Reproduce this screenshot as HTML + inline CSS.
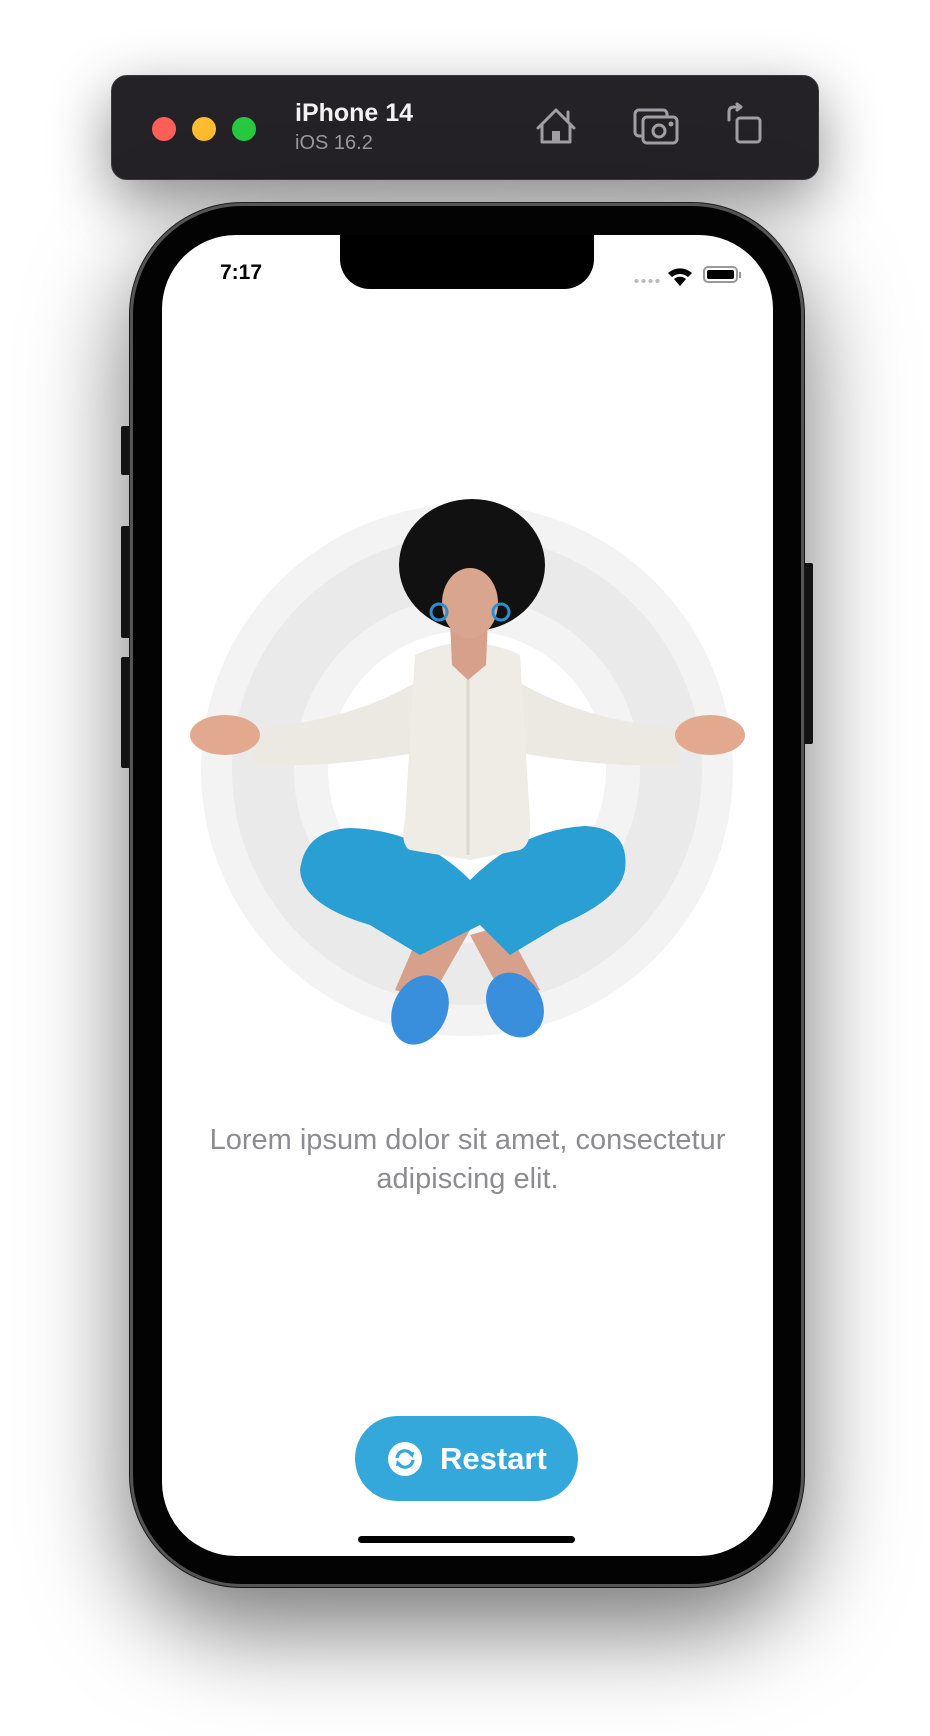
<!DOCTYPE html>
<html><head><meta charset="utf-8"><style>
*{margin:0;padding:0;box-sizing:border-box}
body{width:930px;height:1736px;background:#fff;position:relative;overflow:hidden;font-family:"Liberation Sans",sans-serif}
.abs{position:absolute}
.bar{left:111px;top:75px;width:708px;height:105px;background:#242227;border-radius:16px;box-shadow:0 20px 60px rgba(0,0,0,.45);border:1px solid #3a383d}
.dot{width:24px;height:24px;border-radius:50%;top:117px}
.phone{left:130px;top:203px;width:674px;height:1384px;border-radius:112px;background:#030303;border:3px solid #555;box-shadow:0 40px 100px rgba(0,0,0,.55),0 0 0 1px #222}
.screen{left:162px;top:235px;width:611px;height:1321px;border-radius:74px;background:#fff;overflow:hidden}
.side{background:#1a1a1a;border-radius:2px}
</style></head><body>
<div class="abs bar"></div>
<div class="abs dot" style="left:152px;background:#fe5f57"></div>
<div class="abs dot" style="left:192px;background:#febc2e"></div>
<div class="abs dot" style="left:232px;background:#28c840"></div>
<div class="abs" style="left:295px;top:99px;color:#f2f2f2;font-weight:bold;font-size:25px">iPhone 14</div>
<div class="abs" style="left:295px;top:132px;color:#9a989d;font-size:20px">iOS 16.2</div>
<svg class="abs" style="left:530px;top:100px" width="240" height="50" viewBox="530 100 240 50" fill="none" stroke="#a19fa4" stroke-width="3" stroke-linejoin="round" stroke-linecap="round">
<path d="M538 128 L556 110 L574 128 M542 124 V142 H570 V124 M568 112 V120"/><rect x="552" y="131" width="8" height="11" fill="#a19fa4" stroke="none"/>
<rect x="635" y="110" width="32" height="26" rx="4"/><rect x="643" y="117" width="34" height="26" rx="4" fill="#242227"/><circle cx="659" cy="131" r="6"/><circle cx="671" cy="124" r="1" fill="#a19fa4"/>
<rect x="737" y="118" width="23" height="24" rx="3"/><path d="M729 120 V112 Q729 107 734 107 H740 M737 104 L741 107 L737 110"/>
</svg>
<div class="abs side" style="left:121px;top:426px;width:10px;height:49px"></div>
<div class="abs side" style="left:121px;top:526px;width:10px;height:112px"></div>
<div class="abs side" style="left:121px;top:657px;width:10px;height:111px"></div>
<div class="abs side" style="left:803px;top:563px;width:10px;height:181px"></div>
<div class="abs phone"></div>
<div class="abs screen">
<div class="abs" style="left:178px;top:0;width:254px;height:54px;background:#000;border-radius:0 0 30px 30px"></div>
<div class="abs" style="left:58px;top:26px;font-weight:bold;font-size:21px;color:#000">7:17</div>
<div class="abs" style="left:471px;top:44px;width:27px;height:4px;background-image:radial-gradient(circle,#bbb 2px,transparent 2.2px);background-size:7px 4px"></div>
<svg class="abs" style="left:504px;top:30px" width="30" height="22" viewBox="0 0 30 22"><path d="M2 8 A18 18 0 0 1 26 8 L22 12 A12 12 0 0 0 6 12Z M8 14 A9 9 0 0 1 20 14 L14 21Z" fill="#000"/></svg>
<div class="abs" style="left:541px;top:31px;width:35px;height:17px;border:2px solid #999;border-radius:5px;padding:2px"><div style="width:100%;height:100%;background:#000;border-radius:2px"></div></div>
<div class="abs" style="left:577px;top:37px;width:2px;height:6px;background:#999"></div>
<svg class="abs" style="left:0;top:0" width="611" height="1321" viewBox="162 235 611 1321">
<circle cx="467" cy="770" r="266" fill="#f3f3f3"/>
<circle cx="467" cy="770" r="235" fill="#eaeaea"/>
<circle cx="467" cy="770" r="173" fill="#f3f3f3"/>
<circle cx="467" cy="770" r="139" fill="#fff"/>
<path d="M425 920 L395 990 L430 1000 L470 930Z" fill="#d7a08a"/>
<path d="M505 925 L540 990 L505 1000 L470 935Z" fill="#d7a08a"/>
<path d="M300 870 Q305 830 350 828 Q420 830 470 880 Q520 830 585 826 Q630 828 625 870 Q620 900 560 925 L510 955 L480 925 L420 955 L370 925 Q302 905 300 870Z" fill="#2a9fd4"/>
<ellipse cx="420" cy="1010" rx="27" ry="36" fill="#3a8fdc" transform="rotate(25 420 1010)"/>
<ellipse cx="515" cy="1005" rx="27" ry="34" fill="#3a8fdc" transform="rotate(-30 515 1005)"/>
<path d="M255 728 Q350 722 420 680 L430 750 Q340 768 255 765Z" fill="#ece9e3"/>
<path d="M680 728 Q585 722 515 680 L505 750 Q595 768 680 765Z" fill="#ece9e3"/>
<ellipse cx="225" cy="735" rx="35" ry="20" fill="#e3a98f"/>
<ellipse cx="710" cy="735" rx="35" ry="20" fill="#e3a98f"/>
<path d="M415 655 Q468 630 520 655 L530 820 Q532 845 520 850 L470 860 L410 850 Q400 845 405 820Z" fill="#efece6"/>
<path d="M468 660 V855" stroke="#dcd8d0" stroke-width="3"/>
<path d="M450 620 L488 620 L486 665 L468 680 L452 665Z" fill="#d7a08a"/>
<ellipse cx="472" cy="565" rx="73" ry="66" fill="#111"/>
<ellipse cx="470" cy="603" rx="28" ry="35" fill="#d9a58e"/>
<path d="M440 580 Q470 555 500 580 L500 560 Q470 540 440 560Z" fill="#111"/>
<circle cx="439" cy="612" r="8" fill="none" stroke="#2c8fcf" stroke-width="3"/>
<circle cx="501" cy="612" r="8" fill="none" stroke="#2c8fcf" stroke-width="3"/>
</svg>
<div class="abs" style="left:-20px;width:651px;top:886px;text-align:center;color:#8c8c91;font-size:29px;line-height:39px">Lorem ipsum dolor sit amet, consectetur<br>adipiscing elit.</div>
<div class="abs" style="left:193px;top:1181px;width:223px;height:85px;border-radius:43px;background:#34a8db;color:#fff;font-weight:bold;font-size:31px;line-height:85px">
<svg class="abs" style="left:33px;top:26px" width="34" height="34" viewBox="0 0 34 34"><circle cx="17" cy="17" r="17" fill="#fff"/><path d="M9 16 A8 8 0 0 1 24 13 M25 18 A8 8 0 0 1 10 21" fill="none" stroke="#34a8db" stroke-width="3.2"/><path d="M20 11 L26 10 L25 16Z M14 23 L8 24 L9 18Z" fill="#34a8db"/></svg>
<span class="abs" style="left:85px;top:0">Restart</span></div>
<div class="abs" style="left:196px;top:1301px;width:217px;height:7px;border-radius:4px;background:#000"></div>
</div>
</body></html>
